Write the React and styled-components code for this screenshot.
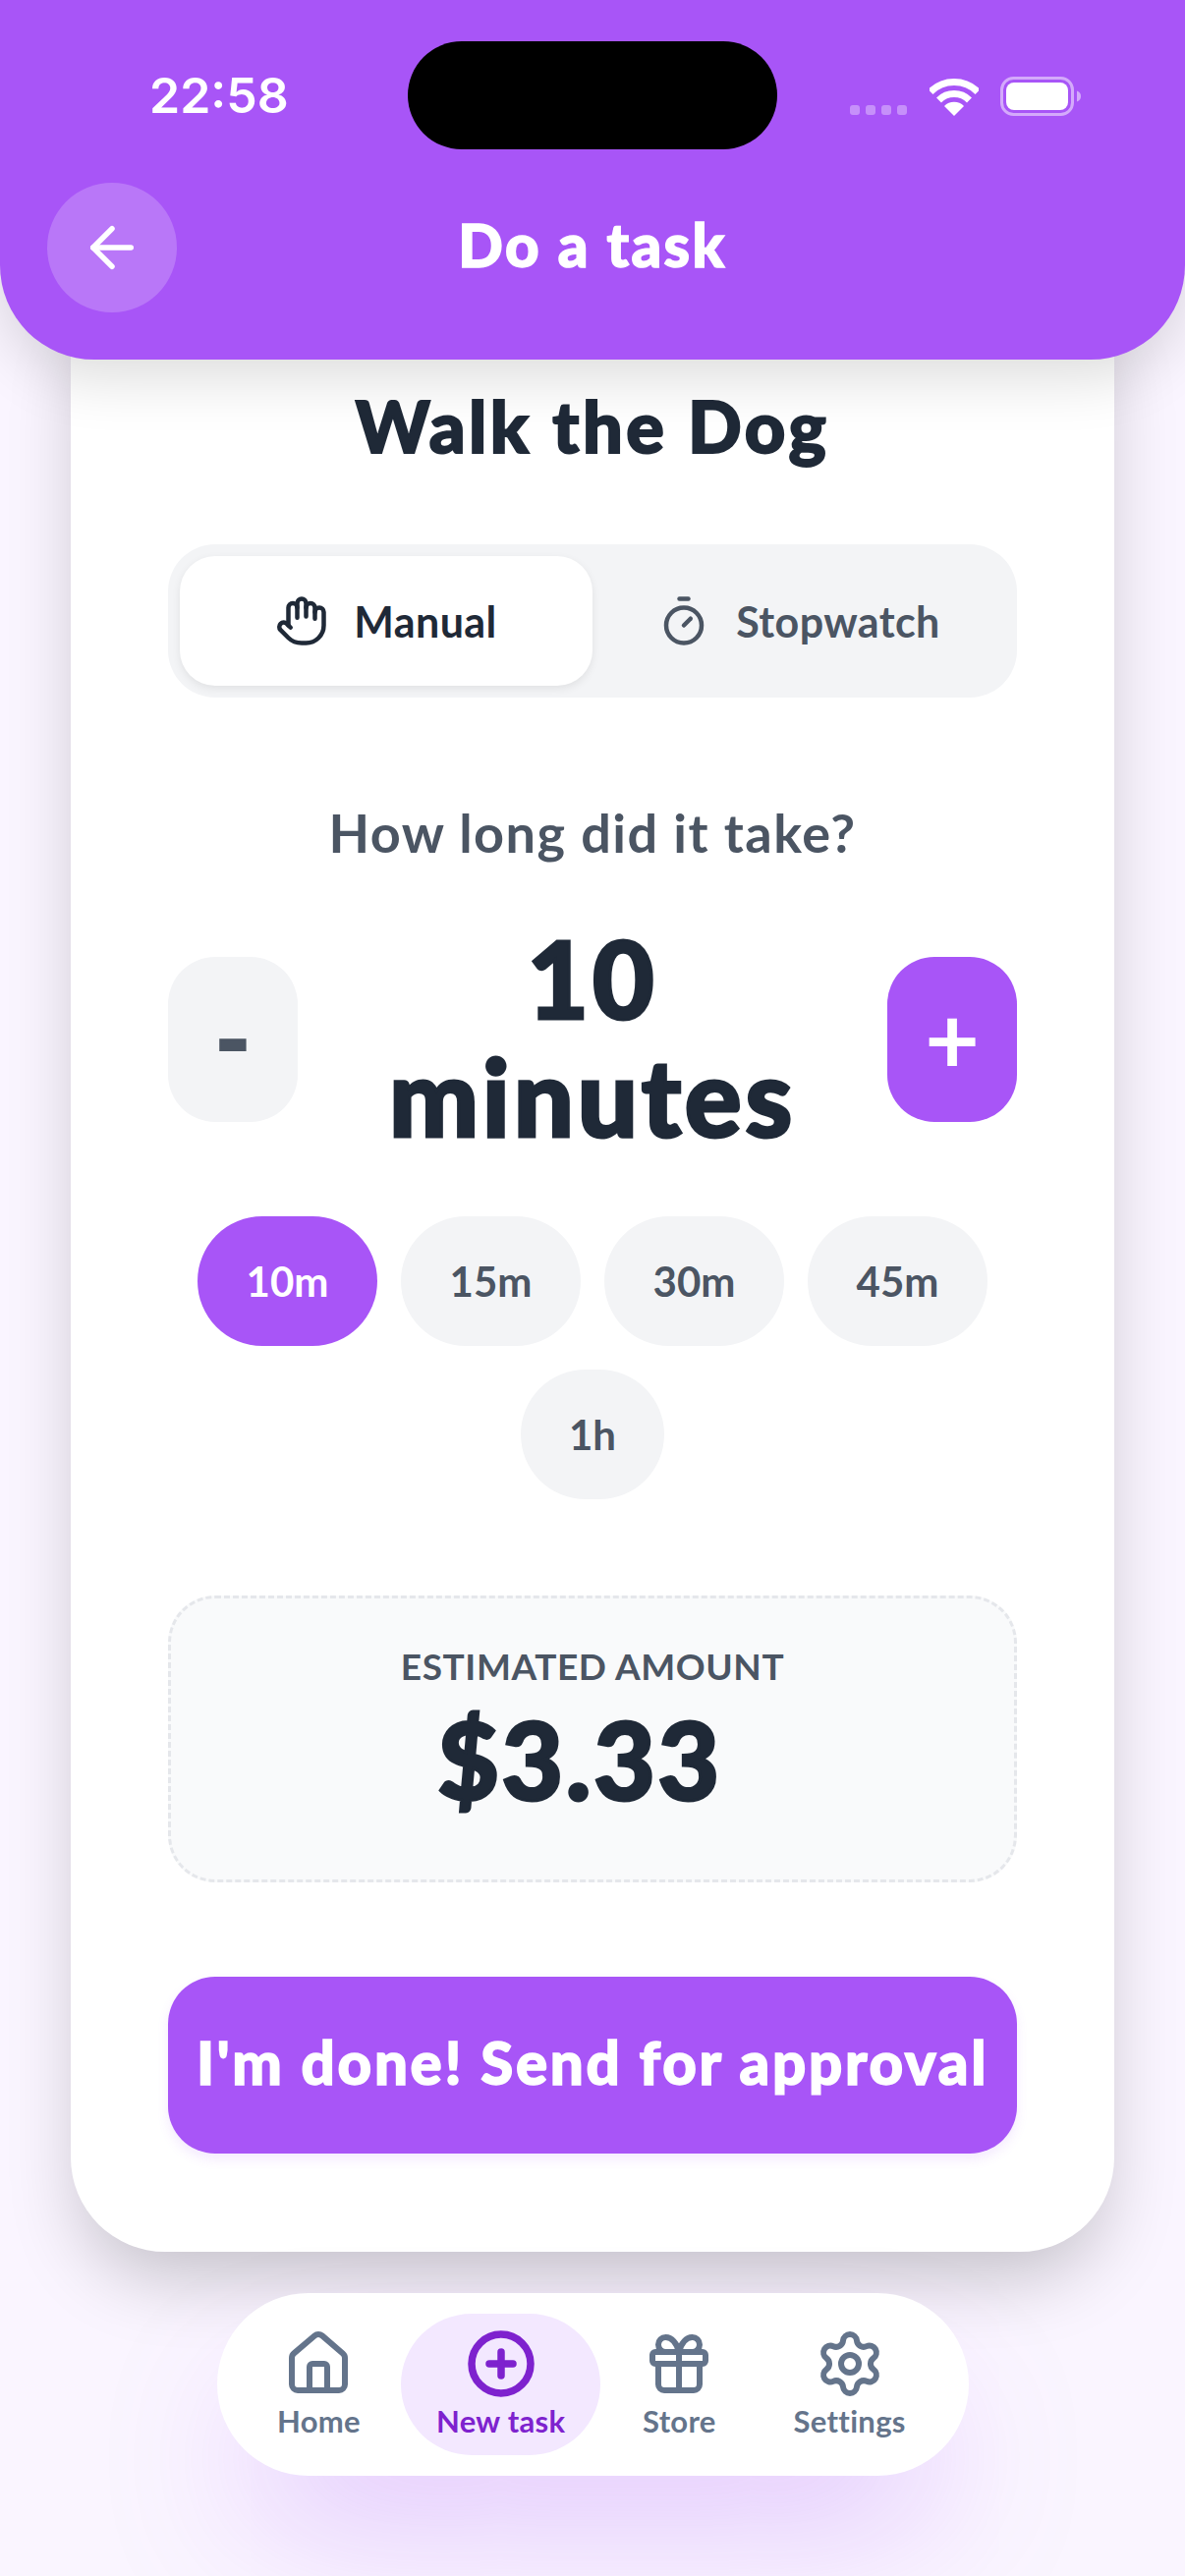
import React from "react"
import styled, {createGlobalStyle} from "styled-components"
import {ArrowLeft, Hand, Timer, House, CirclePlus, Gift, Settings} from "lucide-react"

const purple = "#a855f7"
const ink = "#1f2937"
const gray = "#4b5563"
const FONT = `"Lato", "Noto Sans", sans-serif`

const GlobalStyle = createGlobalStyle`
	html, body {
		margin: 0;
		padding: 0;
		background: #faf5ff;
	}
	* {
		box-sizing: border-box;
	}
`

const chips = [
	{label: "10m", active: true},
	{label: "15m"},
	{label: "30m"},
	{label: "45m"},
	{label: "1h", small: true},
]

const navItems = [
	{label: "Home", icon: House, width: 152},
	{label: "New task", icon: CirclePlus, width: 203, active: true},
	{label: "Store", icon: Gift, width: 145},
	{label: "Settings", icon: Settings, width: 186},
]

const Wifi = () => (
	<svg width="50" height="38" viewBox="0 0 50 38">
		<path d="M1 13.5a34 34 0 0 1 48 0" fill="none" stroke="#fff" strokeWidth="7"/>
		<path d="M9.5 22a22 22 0 0 1 31 0" fill="none" stroke="#fff" strokeWidth="7"/>
		<path d="M25 38l-10-10a14 14 0 0 1 20 0z" fill="#fff"/>
	</svg>
)

const Battery = () => (
	<svg width="82" height="40" viewBox="0 0 82 40">
		<rect x="1.500" y="1.500" width="72" height="37" rx="12" fill="none" stroke="#fff" strokeOpacity=".5" strokeWidth="3"/>
		<rect x="6" y="6" width="63" height="28" rx="8" fill="#fff"/>
		<path d="M78 14.500c3 1 4 3 4 5.500s-1 4.500-4 5.500z" fill="#fff" fillOpacity=".5"/>
	</svg>
)

const App = () => {
	return (
		<Page>
			<GlobalStyle/>
			<Header>
				<StatusBar>
					<Time>22:58</Time>
					<Island/>
					<StatusIcons>
						<Dots>
							<Dot/><Dot/><Dot/><Dot/>
						</Dots>
						<Wifi/>
						<Battery/>
					</StatusIcons>
				</StatusBar>
				<TitleRow>
					<BackButton><ArrowLeft size={66} strokeWidth={2}/></BackButton>
					<HeaderTitle>Do a task</HeaderTitle>
				</TitleRow>
			</Header>

			<Card>
				<TaskName>Walk the Dog</TaskName>
				<Segment>
					<Tab $active>
						<Hand size={54} strokeWidth={2}/>
						<span>Manual</span>
					</Tab>
					<Tab>
						<Timer size={54} strokeWidth={2}/>
						<span>Stopwatch</span>
					</Tab>
				</Segment>

				<Question>How long did it take?</Question>
				<Stepper>
					<StepButton>-</StepButton>
					<Duration>10<br/>minutes</Duration>
					<StepButton $primary>+</StepButton>
				</Stepper>

				<Chips>
					{chips.map(c => (
						<Chip key={c.label} $active={c.active} $small={c.small}>{c.label}</Chip>
					))}
				</Chips>

				<Estimate>
					<EstimateLabel>ESTIMATED AMOUNT</EstimateLabel>
					<EstimateValue>$3.33</EstimateValue>
				</Estimate>

				<SubmitButton>I'm done! Send for approval</SubmitButton>
			</Card>

			<Nav>
				{navItems.map(item => {
					const Icon = item.icon
					return (
						<NavItem key={item.label} $active={item.active} $width={item.width}>
							<Icon size={72} strokeWidth={item.active ? 2.5 : 2}/>
							<NavLabel>{item.label}</NavLabel>
						</NavItem>
					)
				})}
			</Nav>
		</Page>
	)
}

export default App

const Page = styled.div`
	width: 1206px;
	height: 2622px;
	overflow: hidden;
	background: #faf5ff;
	font-family: ${FONT};
	display: flex;
	flex-direction: column;
	align-items: center;
`

const Header = styled.header`
	position: relative;
	z-index: 2;
	width: 100%;
	height: 366px;
	padding-top: 42px;
	background: ${purple};
	border-radius: 0 0 96px 96px;
	box-shadow: 0 18px 60px rgba(0, 0, 0, 0.14);
	flex: none;
`

const StatusBar = styled.div`
	display: grid;
	grid-template-columns: 415px 376px 415px;
	height: 110px;
	align-items: center;
`

const Time = styled.div`
	padding-left: 152px;
	font-family: "Inter", sans-serif;
	font-weight: 600;
	font-size: 50px;
	color: #fff;
`

const Island = styled.div`
	height: 110px;
	background: #000;
	border-radius: 55px;
`

const StatusIcons = styled.div`
	display: flex;
	align-items: flex-end;
	height: 40px;
	margin-top: 2px;
	padding-left: 74px;
	& svg:nth-of-type(1) {
		margin: 0 22px 0 23px;
	}
`

const Dots = styled.div`
	display: flex;
	gap: 6px;
	padding-bottom: 1px;
`

const Dot = styled.span`
	width: 10px;
	height: 10px;
	border-radius: 3px;
	background: rgba(255, 255, 255, 0.35);
`

const TitleRow = styled.div`
	display: grid;
	grid-template-columns: 132px 1fr 132px;
	align-items: center;
	margin-top: 34px;
	padding: 0 48px;
`

const BackButton = styled.div`
	width: 132px;
	height: 132px;
	border-radius: 50%;
	background: rgba(255, 255, 255, 0.2);
	color: #fff;
	display: flex;
	align-items: center;
	justify-content: center;
`

const HeaderTitle = styled.h1`
	margin: 0 0 6px;
	font-size: 60px;
	font-weight: 900;
	letter-spacing: 2.4px;
	-webkit-text-stroke: 1.5px #fff;
	color: #fff;
	text-align: center;
`

const Card = styled.main`
	width: 1062px;
	margin-top: -96px;
	padding: 115px 99px 100px;
	background: #fff;
	border-radius: 96px;
	box-shadow: 0 36px 75px -12px rgba(0, 0, 0, 0.22);
	flex: none;
`

const TaskName = styled.h2`
	margin: 0;
	height: 96px;
	line-height: 96px;
	font-size: 72px;
	font-weight: 900;
	letter-spacing: 3.5px;
	-webkit-text-stroke: 2px ${ink};
	color: ${ink};
	text-align: center;
`

const Segment = styled.div`
	display: grid;
	grid-template-columns: 1fr 1fr;
	height: 156px;
	margin-top: 73px;
	padding: 12px;
	background: #f3f4f6;
	border-radius: 48px;
`

const Tab = styled.div`
	display: flex;
	align-items: center;
	justify-content: center;
	gap: 26px;
	font-size: 43px;
	font-weight: 700;
	letter-spacing: 0.4px;
	color: ${props => props.$active ? ink : gray};
	background: ${props => props.$active ? "#fff" : "transparent"};
	border-radius: 36px;
	box-shadow: ${props => props.$active ? "0 3px 9px rgba(0, 0, 0, 0.08)" : "none"};
`

const Question = styled.div`
	margin-top: 102px;
	height: 72px;
	line-height: 72px;
	font-size: 54px;
	font-weight: 700;
	letter-spacing: 1.5px;
	color: ${gray};
	text-align: center;
`

const Stepper = styled.div`
	display: grid;
	grid-template-columns: 132px 1fr 132px;
	grid-template-rows: 240px;
	align-items: center;
	margin-top: 54px;
`

const StepButton = styled.div`
	height: 168px;
	padding-bottom: 6px;
	border-radius: 48px;
	display: flex;
	align-items: center;
	justify-content: center;
	font-size: ${props => props.$primary ? 96 : 96}px;
	font-weight: ${props => props.$primary ? 700 : 900};
	-webkit-text-stroke: ${props => props.$primary ? "0" : `2px ${gray}`};
	color: ${props => props.$primary ? "#fff" : gray};
	background: ${props => props.$primary ? purple : "#f3f4f6"};
`

const Duration = styled.div`
	margin-bottom: 6px;
	font-size: 108px;
	line-height: 120px;
	font-weight: 900;
	letter-spacing: 3.8px;
	-webkit-text-stroke: 3px ${ink};
	color: ${ink};
	text-align: center;
`

const Chips = styled.div`
	display: flex;
	flex-wrap: wrap;
	justify-content: center;
	gap: 24px;
	margin-top: 60px;
`

const Chip = styled.div`
	width: ${props => props.$small ? 146 : 183}px;
	height: 132px;
	border-radius: 66px;
	display: flex;
	align-items: center;
	justify-content: center;
	font-size: 42px;
	font-weight: 700;
	color: ${props => props.$active ? "#fff" : gray};
	background: ${props => props.$active ? purple : "#f3f4f6"};
`

const Estimate = styled.div`
	height: 292px;
	margin-top: 98px;
	padding-top: 45px;
	background: #f9fafb;
	border: 3px dashed #e5e7eb;
	border-radius: 48px;
	text-align: center;
`

const EstimateLabel = styled.div`
	height: 58px;
	line-height: 48px;
	font-size: 37px;
	font-weight: 700;
	letter-spacing: 0.6px;
	color: ${gray};
`

const EstimateValue = styled.div`
	padding-right: 26px;
	font-size: 108px;
	line-height: 120px;
	font-weight: 900;
	letter-spacing: 2.6px;
	-webkit-text-stroke: 3px ${ink};
	color: ${ink};
`

const SubmitButton = styled.div`
	height: 180px;
	margin-top: 96px;
	padding-bottom: 6px;
	border-radius: 48px;
	background: ${purple};
	box-shadow: 0 6px 12px rgba(168, 85, 247, 0.12);
	display: flex;
	align-items: center;
	justify-content: center;
	font-size: 60px;
	font-weight: 900;
	letter-spacing: 2.7px;
	-webkit-text-stroke: 1.5px #fff;
	color: #fff;
`

const Nav = styled.nav`
	display: flex;
	gap: 8px;
	width: 765px;
	height: 186px;
	margin-top: 42px;
	padding: 21px 28px;
	background: #fff;
	border-radius: 93px;
	box-shadow: 0 75px 150px -36px rgba(168, 85, 247, 0.34);
	flex: none;
`

const NavItem = styled.div`
	width: ${props => props.$width}px;
	height: 144px;
	padding-top: 15px;
	border-radius: 72px;
	display: flex;
	flex-direction: column;
	align-items: center;
	color: ${props => props.$active ? "#7e22ce" : "#64748b"};
	background: ${props => props.$active ? "#f3e8ff" : "transparent"};
`

const NavLabel = styled.span`
	height: 45px;
	line-height: 45px;
	font-size: 31px;
	font-weight: 700;
	letter-spacing: 0.3px;
`
